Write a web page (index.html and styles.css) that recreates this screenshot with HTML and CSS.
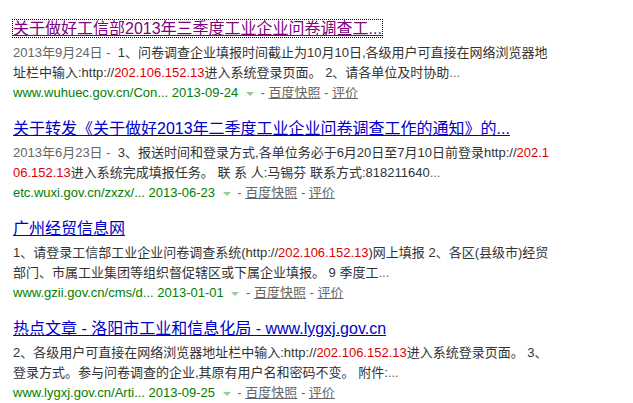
FILE: index.html
```html
<!DOCTYPE html>
<html lang="zh-CN">
<head>
<meta charset="utf-8">
<title>搜索结果</title>
<link rel="stylesheet" href="styles.css">
</head>
<body>
<div class="results">
  <div class="result">
    <h3 class="t"><a class="visited focus" href="#">关于做好工信部2013年三季度工业企业问卷调查工...</a></h3>
    <div class="abs"><span class="date">2013年9月24日&nbsp;-&nbsp;</span>&nbsp;1、问卷调查企业填报时间截止为10月10日,各级用户可直接在网络浏览器地<br>址栏中输入:http://<em>202.106.152.13</em>进入系统登录页面。&nbsp;2、请各单位及时协助<span class="ell">...</span></div>
    <div class="f"><span class="url">www.wuhuec.gov.cn/Con...&nbsp;2013-09-24&nbsp;</span><span class="arrow"></span>&nbsp;-&nbsp;<a href="#">百度快照</a>&nbsp;-&nbsp;<a href="#">评价</a></div>
  </div>
  <div class="result">
    <h3 class="t"><a href="#">关于转发《关于做好2013年二季度工业企业问卷调查工作的通知》的...</a></h3>
    <div class="abs"><span class="date">2013年6月23日&nbsp;-&nbsp;</span>&nbsp;3、报送时间和登录方式,各单位务必于6月20日至7月10日前登录http://<em>202.1</em><br><em>06.152.13</em>进入系统完成填报任务。&nbsp;联&nbsp;系&nbsp;人:马锡芬&nbsp;联系方式:818211640<span class="ell">...</span></div>
    <div class="f"><span class="url">etc.wuxi.gov.cn/zxzx/...&nbsp;2013-06-23&nbsp;</span><span class="arrow"></span>&nbsp;-&nbsp;<a href="#">百度快照</a>&nbsp;-&nbsp;<a href="#">评价</a></div>
  </div>
  <div class="result">
    <h3 class="t"><a href="#">广州经贸信息网</a></h3>
    <div class="abs">1、请登录工信部工业企业问卷调查系统(http://<em>202.106.152.13</em>)网上填报&nbsp;2、各区(县级市)经贸<br>部门、市属工业集团等组织督促辖区或下属企业填报。&nbsp;9&nbsp;季度工<span class="ell">...</span></div>
    <div class="f"><span class="url">www.gzii.gov.cn/cms/d...&nbsp;2013-01-01&nbsp;</span><span class="arrow"></span>&nbsp;-&nbsp;<a href="#">百度快照</a>&nbsp;-&nbsp;<a href="#">评价</a></div>
  </div>
  <div class="result">
    <h3 class="t"><a href="#">热点文章 - 洛阳市工业和信息化局 - www.lygxj.gov.cn</a></h3>
    <div class="abs">2、各级用户可直接在网络浏览器地址栏中输入:http://<em>202.106.152.13</em>进入系统登录页面。&nbsp;3、<br>登录方式。参与问卷调查的企业,其原有用户名和密码不变。&nbsp;附件:<span class="ell">...</span></div>
    <div class="f"><span class="url">www.lygxj.gov.cn/Arti...&nbsp;2013-09-25&nbsp;</span><span class="arrow"></span>&nbsp;-&nbsp;<a href="#">百度快照</a>&nbsp;-&nbsp;<a href="#">评价</a></div>
  </div>
</div>
</body>
</html>
```

FILE: styles.css
```css
html, body {
  margin: 0;
  padding: 0;
  background: #fff;
}
body {
  font-family: "Liberation Sans", Arial, "Noto Sans CJK SC", sans-serif;
  font-size: 13px;
  color: #333;
}
.results {
  padding: 17px 0 0 13px;
  display: flex;
  flex-direction: column;
  gap: 14px;
}
.result {
  width: 560px;
}
.t {
  margin: 0;
  font-size: 16px;
  font-weight: normal;
  line-height: 24px;
  white-space: nowrap;
}
.t a {
  color: #0000cc;
  text-decoration: underline;
}
.t a.visited {
  color: #800080;
}
.t a.focus {
  outline: 1px dotted #000;
  outline-offset: 0;
}
.abs {
  margin-top: 2px;
  line-height: 20px;
  white-space: nowrap;
}
.date, .ell {
  color: #666;
}
em {
  font-style: normal;
  color: #e00000;
}
.f {
  line-height: 20px;
  color: #666;
  white-space: nowrap;
}
.url {
  color: #008000;
}
.arrow {
  display: inline-block;
  width: 0;
  height: 0;
  margin: 0 3px 0 4px;
  border-left: 4px solid transparent;
  border-right: 4px solid transparent;
  border-top: 4px solid #9ac89a;
  vertical-align: middle;
}
.f a {
  color: #666;
  text-decoration: underline;
}
```
